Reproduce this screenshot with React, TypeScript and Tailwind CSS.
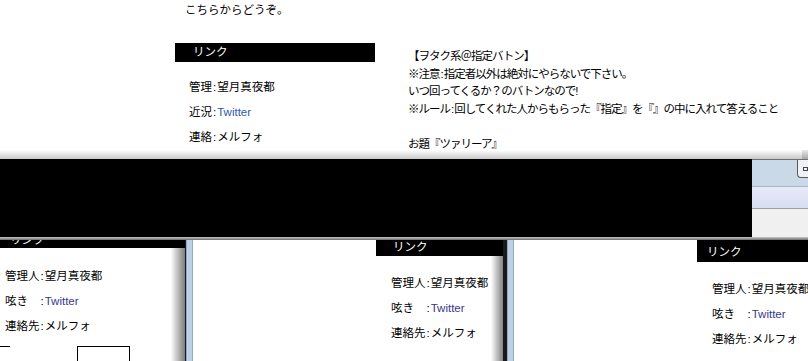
import React from "react";

const FONT = "font-['Liberation_Sans','Noto_Sans_CJK_JP',sans-serif]";

function Row({ label, value, link }: { label: string; value: string; link?: string }) {
    return (
        <div className="h-[25px] leading-[25px] whitespace-nowrap">
            {label}
            <span className="px-[1px]">:</span>
            <span className={link}>{value}</span>
        </div>
    );
}

function PanelRows() {
    return (
        <>
            <Row label="管理人" value="望月真夜都" />
            <Row label="呟き　" value="Twitter" link="text-[#38388c]" />
            <Row label="連絡先" value="メルフォ" />
        </>
    );
}

function Frame({ edge }: { edge: string }) {
    return (
        <div className="flex h-full shrink-0">
            <div className={`${edge} bg-[#1a1a1a]`} />
            <div className="w-[7px] bg-[#bcd0e6] border-x border-[#93a9c2]" />
        </div>
    );
}

export default function App() {
    return (
        <div className={`w-[808px] h-[361px] overflow-hidden bg-white text-black text-[11.5px] ${FONT}`}>
            {/* blog page */}
            <section className="h-[150px] flex">
                <div className="w-[175px] shrink-0" />
                <div className="w-[200px] shrink-0 flex flex-col">
                    <div className="h-[43px] pl-[10px] leading-[20px] whitespace-nowrap">
                        こちらからどうぞ。
                    </div>
                    <div className="h-[19px] bg-black text-white pl-[18px] leading-[19px]">
                        リンク
                    </div>
                    <div className="pt-[13px] pl-[14px]">
                        <Row label="管理" value="望月真夜都" />
                        <Row label="近況" value="Twitter" link="text-[#2f58a8]" />
                        <Row label="連絡" value="メルフォ" />
                    </div>
                </div>
                <div className="ml-[33px] pt-[48px] leading-[17.5px] tracking-[-1px] whitespace-nowrap">
                    <div>【ヲタク系＠指定バトン】</div>
                    <div>※注意<span className="px-[1px]">:</span>指定者以外は絶対にやらないで下さい。</div>
                    <div>いつ回ってくるか？のバトンなので!</div>
                    <div>※ルール<span className="px-[1px]">:</span>回してくれた人からもらった『指定』を『』の中に入れて答えること</div>
                    <div>&nbsp;</div>
                    <div>お題『ツァリーア』</div>
                </div>
            </section>

            <div className="h-[9px] bg-gradient-to-b from-white to-[#c9c9c9] flex justify-end">
                <div className="w-[6px] bg-gradient-to-b from-[#e8e8e8] to-[#a8a8a8]" />
            </div>

            {/* window chrome */}
            <div className="h-[78px] flex">
                <div className="w-[752px] bg-black shrink-0" />
                <div className="flex-1 flex flex-col bg-[#f0f0f0]">
                    <div className="h-[1px] bg-[#707070]" />
                    <div className="h-[26px] bg-[#c9d9e8] flex justify-end items-start">
                        <div className="w-[11px] h-[18px] bg-[#eef2f7] border-l border-b border-[#5a5a5a] rounded-bl-[4px] flex items-center justify-end">
                            <div className="w-[5px] h-[4px] border border-[#444]" />
                        </div>
                    </div>
                    <div className="h-[1px] bg-[#a9b9cc]" />
                    <div className="h-[21px] bg-gradient-to-b from-[#e6eaf7] to-[#d8def2]" />
                    <div className="h-[1px] bg-[#a0a0a0]" />
                    <div className="flex-1 bg-[#f0f0f0]" />
                </div>
            </div>

            <div className="h-[3px] bg-gradient-to-b from-[#c8c8c8] to-[#6e6e6e]" />

            {/* three snapshots */}
            <div className="h-[121px] flex">
                <div className="w-[185px] shrink-0 flex flex-col">
                    <div className="h-[8px] bg-black text-white pl-[10px] overflow-hidden">
                        <div className="-mt-[7px] leading-[14px]">リンク</div>
                    </div>
                    <div className="flex-1 flex">
                        <div className="flex-1 flex flex-col">
                            <div className="pt-[16px] pl-[5px]">
                                <PanelRows />
                            </div>
                            <div className="mt-[7px] flex items-start flex-1">
                                <div className="w-[10px] h-[1px] bg-black" />
                                <div className="ml-[67px] w-[53px] h-full border-t border-x border-black" />
                            </div>
                        </div>
                        <div className="w-[14px] bg-gradient-to-r from-white to-[#7d7d7d]" />
                    </div>
                </div>
                <Frame edge="w-[1px]" />

                <div className="w-[310px] shrink-0 flex justify-end">
                    <div className="w-[127px] flex flex-col">
                        <div className="h-[16px] bg-black text-white pl-[17px] leading-[15px]">
                            リンク
                        </div>
                        <div className="flex-1 flex">
                            <div className="flex-1 pt-[15px] pl-[15px] overflow-hidden">
                                <PanelRows />
                            </div>
                            <div className="w-[12px] bg-gradient-to-r from-white to-[#858585]" />
                        </div>
                    </div>
                </div>
                <Frame edge="w-[4px]" />

                <div className="flex-1 flex justify-end overflow-hidden">
                    <div className="w-[111px] shrink-0 flex flex-col">
                        <div className="h-[22px] bg-black text-white pl-[10px] leading-[24px]">
                            リンク
                        </div>
                        <div className="pt-[15px] pl-[15px]">
                            <PanelRows />
                        </div>
                    </div>
                </div>
            </div>
        </div>
    );
}
